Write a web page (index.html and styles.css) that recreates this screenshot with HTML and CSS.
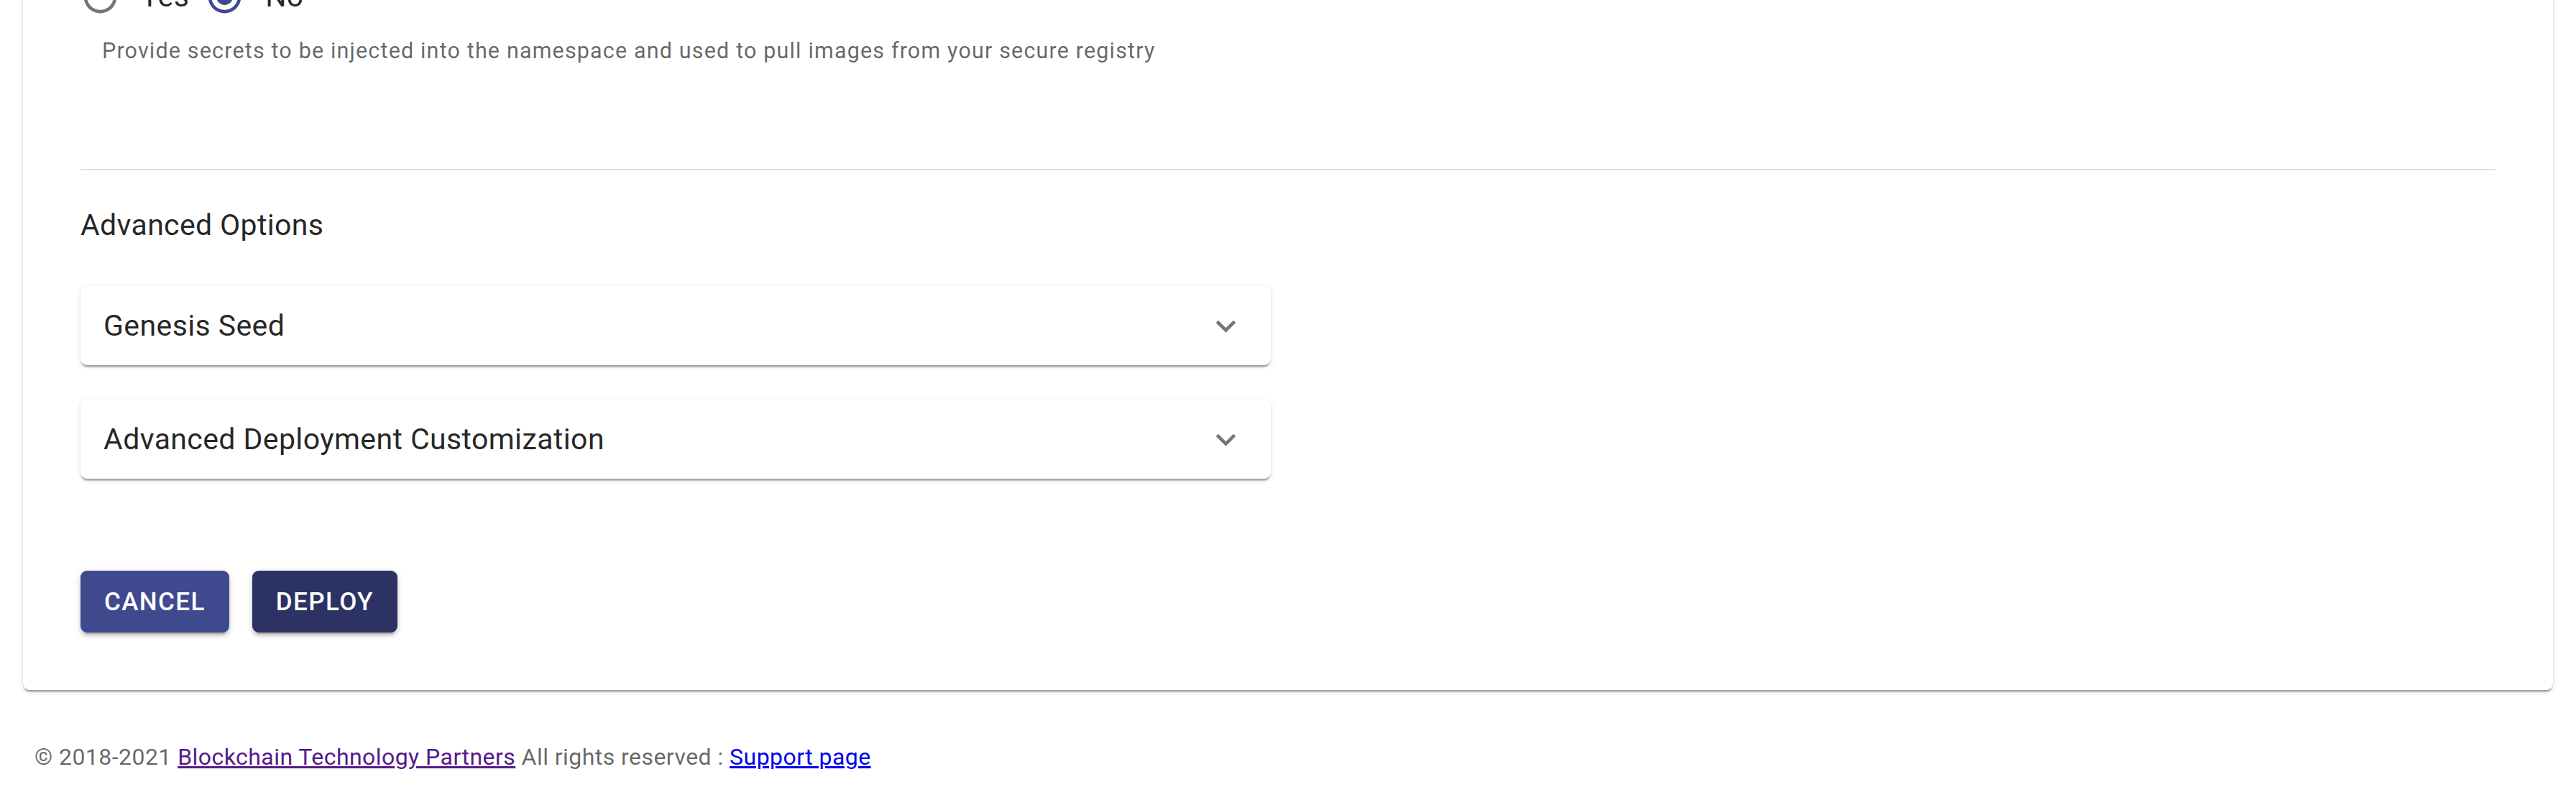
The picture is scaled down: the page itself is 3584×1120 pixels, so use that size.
FILE: index.html
```html
<!DOCTYPE html>
<html lang="en">
<head>
<meta charset="utf-8">
<title>Deploy</title>
<link rel="stylesheet" href="styles.css">
</head>
<body>
<div class="page">
  <div class="card">
    <div class="radio-row">
      <label class="radio-option">
        <span class="radio-icon">
          <svg viewBox="0 0 24 24" width="55" height="55"><path fill="#757575" d="M12 2C6.48 2 2 6.48 2 12s4.48 10 10 10 10-4.48 10-10S17.52 2 12 2zm0 18c-4.42 0-8-3.58-8-8s3.58-8 8-8 8 3.58 8 8-3.58 8-8 8z"/></svg>
        </span>
        <span class="radio-label">Yes</span>
      </label>
      <label class="radio-option">
        <span class="radio-icon">
          <svg viewBox="0 0 24 24" width="55" height="55"><path fill="#3f4a8e" d="M12 2C6.48 2 2 6.48 2 12s4.48 10 10 10 10-4.48 10-10S17.52 2 12 2zm0 18c-4.42 0-8-3.58-8-8s3.58-8 8-8 8 3.58 8 8-3.58 8-8 8z"/><circle cx="12" cy="12" r="5" fill="#3f4a8e"/></svg>
        </span>
        <span class="radio-label">No</span>
      </label>
    </div>
    <p class="helper">Provide secrets to be injected into the namespace and used to pull images from your secure registry</p>
    <hr class="divider">
    <h2 class="section-title">Advanced Options</h2>
    <div class="accordions">
      <div class="accordion">
        <span class="accordion-title">Genesis Seed</span>
        <svg class="chevron" viewBox="0 0 24 24" width="55" height="55"><path d="M16.59 8.59L12 13.17 7.41 8.59 6 10l6 6 6-6z"/></svg>
      </div>
      <div class="accordion">
        <span class="accordion-title">Advanced Deployment Customization</span>
        <svg class="chevron" viewBox="0 0 24 24" width="55" height="55"><path d="M16.59 8.59L12 13.17 7.41 8.59 6 10l6 6 6-6z"/></svg>
      </div>
    </div>
    <div class="actions">
      <button class="btn btn-cancel">Cancel</button>
      <button class="btn btn-deploy">Deploy</button>
    </div>
  </div>
  <footer class="footer">© 2018-2021 <a class="link-visited" href="#">Blockchain Technology Partners</a> All rights reserved : <a class="link" href="#">Support page</a></footer>
</div>
</body>
</html>
```
FILE: styles.css
```css
html, body {
  margin: 0;
  padding: 0;
  background: #ffffff;
}

body {
  font-family: Roboto, "Liberation Sans", Arial, sans-serif;
  color: rgba(0, 0, 0, 0.87);
}

.page {
  padding: 0 32px;
  margin-top: -53px;
}

.card {
  background: #fff;
  border-radius: 0 0 9px 9px;
  box-shadow: 0 5px 2px -2px rgba(0, 0, 0, 0.2), 0 2px 2px 0 rgba(0, 0, 0, 0.14), 0 2px 7px 0 rgba(0, 0, 0, 0.12);
  padding: 0 80px 80px;
}

.radio-row {
  display: flex;
  align-items: center;
  height: 96px;
}

.radio-option {
  display: flex;
  align-items: center;
  margin-right: 22px;
}

.radio-icon {
  display: flex;
  align-items: center;
  justify-content: center;
  width: 96px;
  height: 96px;
  margin-left: -21px;
}

.radio-label {
  font-size: 41px;
  letter-spacing: 0.3px;
  margin-left: 9px;
}

.helper {
  margin: 7px 0 0 30px;
  font-size: 30.5px;
  line-height: 42px;
  letter-spacing: 1.16px;
  color: rgba(0, 0, 0, 0.6);
}

.divider {
  margin: 143px 0 0;
  border: none;
  height: 2px;
  background: rgba(0, 0, 0, 0.12);
}

.section-title {
  margin: 43px 0 0;
  font-size: 41px;
  font-weight: 400;
  line-height: 66px;
  letter-spacing: 0.35px;
}

.accordions {
  display: flex;
  flex-direction: column;
  gap: 48px;
  margin-top: 52px;
  width: 1656px;
}

.accordion {
  display: flex;
  align-items: center;
  justify-content: space-between;
  height: 110px;
  padding: 0 35px 0 32px;
  border-radius: 9px;
  background: #fff;
  box-shadow: 0 5px 2px -2px rgba(0, 0, 0, 0.2), 0 2px 2px 0 rgba(0, 0, 0, 0.14), 0 2px 7px 0 rgba(0, 0, 0, 0.12);
}

.accordion-title {
  font-size: 41px;
  letter-spacing: 0.4px;
  color: rgba(0, 0, 0, 0.87);
}

.chevron {
  fill: rgba(0, 0, 0, 0.54);
  flex: none;
}

.actions {
  display: flex;
  gap: 32px;
  margin-top: 128px;
}

.btn {
  height: 86px;
  padding: 0 33px;
  border: none;
  border-radius: 9px;
  font-family: Roboto, "Liberation Sans", Arial, sans-serif;
  font-size: 35px;
  font-weight: 500;
  letter-spacing: 1.4px;
  text-transform: uppercase;
  color: #fff;
  box-shadow: 0 7px 2px -5px rgba(0, 0, 0, 0.2), 0 5px 5px 0 rgba(0, 0, 0, 0.14), 0 2px 11px 0 rgba(0, 0, 0, 0.12);
}

.btn-cancel {
  background: #3f4a8e;
}

.btn-deploy {
  background: #2c3264;
}

.footer {
  margin: 71px 0 0 16px;
  font-size: 32px;
  line-height: 45px;
  letter-spacing: 0.45px;
  color: rgba(0, 0, 0, 0.6);
}

.link-visited {
  color: #551a8b;
}

.link {
  color: #0000ee;
}
```
